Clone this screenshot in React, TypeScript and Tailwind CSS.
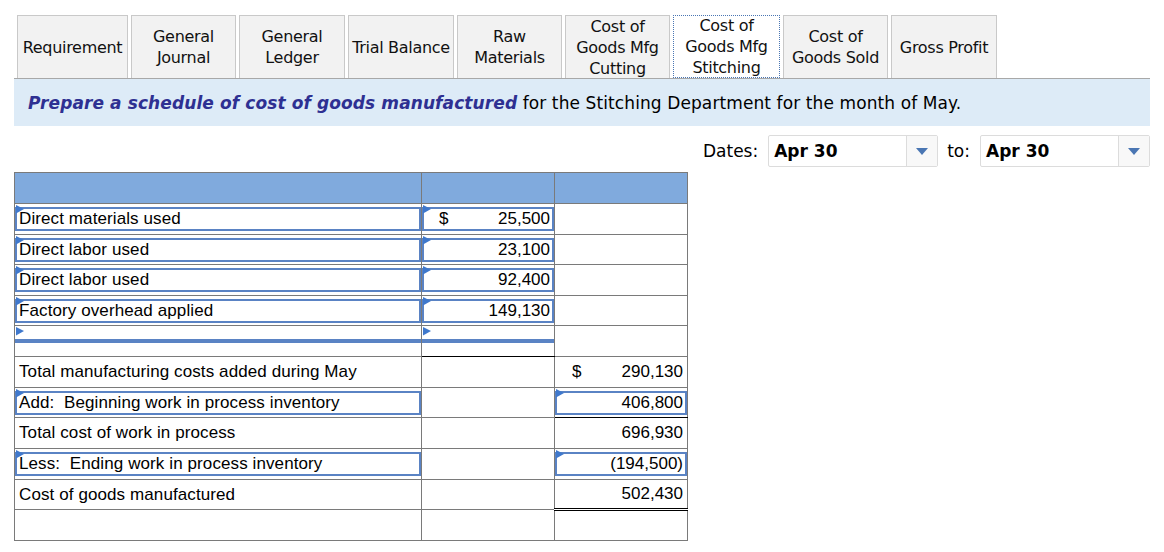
import React from 'react';

type Tab = { lines: string[]; w: string; active?: boolean };

const tabs: Tab[] = [
  { lines: ['Requirement'], w: 'w-[111px]' },
  { lines: ['General', 'Journal'], w: 'w-[105px]' },
  { lines: ['General', 'Ledger'], w: 'w-[106px]' },
  { lines: ['Trial Balance'], w: 'w-[106px]' },
  { lines: ['Raw', 'Materials'], w: 'w-[105px]' },
  { lines: ['Cost of', 'Goods Mfg', 'Cutting'], w: 'w-[105px]' },
  { lines: ['Cost of', 'Goods Mfg', 'Stitching'], w: 'w-[107px]', active: true },
  { lines: ['Cost of', 'Goods Sold'], w: 'w-[105px]' },
  { lines: ['Gross Profit'], w: 'w-[106px]' },
];

type Cell = {
  text?: string;
  dollar?: boolean;
  input?: boolean;
  under?: 'single' | 'double';
};

type Row = { h: string; cells: [Cell, Cell, Cell] };

const rows: Row[] = [
  { h: 'h-[31px]', cells: [{ text: 'Direct materials used', input: true }, { text: '25,500', dollar: true, input: true }, {}] },
  { h: 'h-[30px]', cells: [{ text: 'Direct labor used', input: true }, { text: '23,100', input: true }, {}] },
  { h: 'h-[31px]', cells: [{ text: 'Direct labor used', input: true }, { text: '92,400', input: true }, {}] },
  { h: 'h-[30px]', cells: [{ text: 'Factory overhead applied', input: true }, { text: '149,130', input: true }, {}] },
  { h: 'h-[31px]', cells: [{ input: true }, { input: true, under: 'single' }, {}] },
  { h: 'h-[31px]', cells: [{ text: 'Total manufacturing costs added during May' }, {}, { text: '290,130', dollar: true }] },
  { h: 'h-[30px]', cells: [{ text: 'Add:  Beginning work in process inventory', input: true }, {}, { text: '406,800', input: true, under: 'single' }] },
  { h: 'h-[31px]', cells: [{ text: 'Total cost of work in process' }, {}, { text: '696,930' }] },
  { h: 'h-[31px]', cells: [{ text: 'Less:  Ending work in process inventory', input: true }, {}, { text: '(194,500)', input: true, under: 'single' }] },
  { h: 'h-[30px]', cells: [{ text: 'Cost of goods manufactured' }, {}, { text: '502,430', under: 'double' }] },
  { h: 'h-[31px]', cells: [{}, {}, {}] },
];

function Marker() {
  return (
    <svg className="absolute left-[1px] top-[1px]" width="8" height="9" viewBox="0 0 8 9">
      <path d="M0 0 L8 4 L0 8.5 Z" fill="#3f78cc" />
    </svg>
  );
}

function DropArrow() {
  return (
    <svg width="12" height="7" viewBox="0 0 12 7">
      <path d="M0 0 H12 L6 7 Z" fill="#4a76b3" />
    </svg>
  );
}

function DateSelect() {
  return (
    <div className="flex h-[32px] w-[170px] rounded-[2px] border border-[#dcdcdc] bg-white">
      <div className="flex flex-1 items-center pl-[5px] pt-[2px] text-[17px] font-bold text-black">Apr 30</div>
      <div className="flex w-[31px] items-center justify-center border-l border-[#dcdcdc] bg-[#f8f8f8] pt-[1px]">
        <DropArrow />
      </div>
    </div>
  );
}

function TableCell({ cell, col }: { cell: Cell; col: number }) {
  const isText = col === 0;
  const under =
    cell.under === 'double'
      ? 'border-b-[3px] border-double border-b-black'
      : cell.under === 'single'
        ? 'border-b border-b-black'
        : '';
  return (
    <td className={`relative border border-[#7a7a7a] p-0 ${under}`}>
      <div
        className={`flex h-full items-center border-2 ${cell.input ? 'border-[#5a83c4]' : 'border-transparent'} ${
          isText ? 'pl-[2px]' : 'justify-between pl-[15px] pr-[2px]'
        }`}
      >
        {isText ? (
          <span className="whitespace-pre tracking-[0.1px]">{cell.text}</span>
        ) : (
          <>
            <span>{cell.dollar ? '$' : ''}</span>
            <span>{cell.text}</span>
          </>
        )}
      </div>
      {cell.input && <Marker />}
    </td>
  );
}

export default function App() {
  return (
    <div className="min-h-screen bg-white px-[14px] pt-[15px] text-black">
      {/* Tabs */}
      <div className="flex gap-[3px] border-b border-[#a8a8a8] pl-[3px] font-['DejaVu_Sans',sans-serif] text-[16px] leading-[21px] text-[#111]">
        {tabs.map((t) => (
          <div
            key={t.lines.join(' ')}
            className={`flex h-[63px] ${t.w} flex-col items-center justify-center text-center ${
              t.active
                ? 'border border-dotted border-[#4a76b3] bg-white'
                : 'border border-b-0 border-[#c9c9c9] bg-[#f2f2f2]'
            }`}
          >
            {t.lines.map((l) => (
              <span key={l} className="whitespace-nowrap tracking-[-0.3px]">
                {l}
              </span>
            ))}
          </div>
        ))}
      </div>

      {/* Instructions */}
      <div className="flex h-[47px] items-center bg-[#ddebf7] pl-[14px] pt-[3px] font-['DejaVu_Sans',sans-serif] text-[17px] tracking-[0.1px]">
        <span className="font-bold italic text-[#2e3092]">Prepare a schedule of cost of goods manufactured</span>
        <span>&nbsp;for the Stitching Department for the month of May.</span>
      </div>

      {/* Dates */}
      <div className="mt-[9px] flex items-center justify-end font-['DejaVu_Sans',sans-serif] text-[17px]">
        <span className="mr-[10px] pt-[2px]">Dates:</span>
        <DateSelect />
        <span className="ml-[9px] mr-[10px] pt-[2px]">to:</span>
        <DateSelect />
      </div>

      {/* Schedule */}
      <table className="mt-[5px] w-[673px] table-fixed border-collapse font-['Liberation_Sans',Arial,sans-serif] text-[17px] leading-[20px]">
        <colgroup>
          <col className="w-[407px]" />
          <col className="w-[133px]" />
          <col className="w-[133px]" />
        </colgroup>
        <thead>
          <tr className="h-[31px] bg-[#80aadd]">
            <th className="border border-[#7a7a7a]" />
            <th className="border border-[#7a7a7a]" />
            <th className="border border-[#7a7a7a]" />
          </tr>
        </thead>
        <tbody>
          {rows.map((r, i) => (
            <tr key={i} className={r.h}>
              {r.cells.map((c, j) => (
                <TableCell key={j} cell={c} col={j} />
              ))}
            </tr>
          ))}
        </tbody>
      </table>
    </div>
  );
}
